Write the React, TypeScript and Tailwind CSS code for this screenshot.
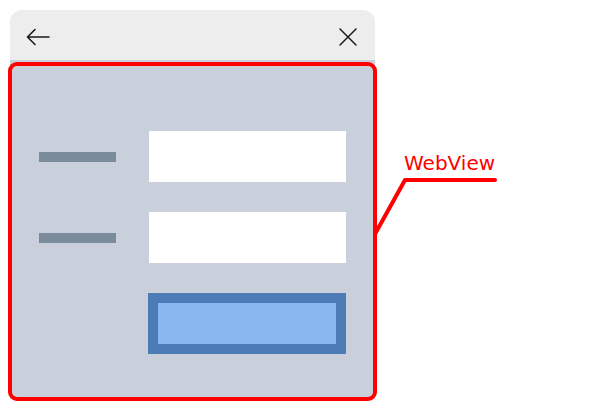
import React from "react";

export default function App() {
  return (
    <div className="relative w-[600px] h-[410px] bg-white overflow-hidden" style={{ fontFamily: '"Noto Sans", sans-serif' }}>
      <div className="ml-[10px] pt-[10px] w-[365px]">
        <div className="h-[50px] bg-[#ededed] rounded-t-[12px] flex items-center justify-between pl-[16px] pr-[18px] pt-[4px]">
          <svg width="24" height="18" viewBox="0 0 24 18" fill="none" stroke="#1a1a1a" strokeWidth="1.6" strokeLinecap="round" strokeLinejoin="round">
            <path d="M23 9 H1.5 M9 1.5 L1.5 9 L9 16.5" />
          </svg>
          <svg width="18" height="18" viewBox="0 0 18 18" fill="none" stroke="#1a1a1a" strokeWidth="1.5" strokeLinecap="round">
            <path d="M1 1 L17 17 M17 1 L1 17" />
          </svg>
        </div>
        <div className="h-[340px] bg-[#c9d0dc] rounded-b-[8px] pt-[71px] pl-[29px] flex flex-col gap-[30px]">
          <div className="flex items-center gap-[33px]">
            <div className="w-[77px] h-[10px] bg-[#7a8b9b]" />
            <div className="w-[197px] h-[51px] bg-white" />
          </div>
          <div className="flex items-center gap-[33px]">
            <div className="w-[77px] h-[10px] bg-[#7a8b9b]" />
            <div className="w-[197px] h-[51px] bg-white" />
          </div>
          <div className="flex items-center gap-[32px]">
            <div className="w-[77px]" />
            <div className="w-[198px] h-[61px] bg-[#4d7bb6] p-[10px]">
              <div className="w-full h-full bg-[#8ab7ef]" />
            </div>
          </div>
        </div>
      </div>
      <div className="absolute left-[8px] top-[62px] w-[369px] h-[339px] border-[4px] border-[#ff0000] rounded-[9px]" />
      <svg className="absolute left-0 top-0" width="600" height="410" fill="none">
        <path d="M375 234 L405 180 H495" stroke="#ff0000" strokeWidth="4" strokeLinecap="round" strokeLinejoin="round" />
      </svg>
      <div className="absolute left-[404px] top-[152px] text-[20px] leading-[23px] text-[#ff0000]" style={{ fontFamily: '"DejaVu Sans", sans-serif' }}>WebView</div>
    </div>
  );
}
